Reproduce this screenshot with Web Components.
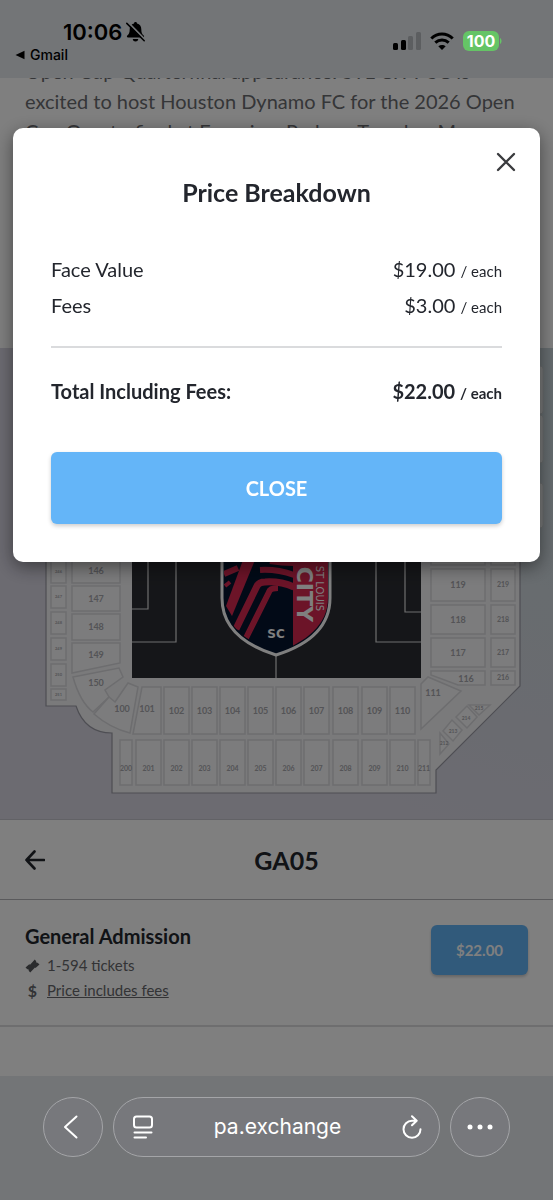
<!DOCTYPE html>
<html lang="en">
<head>
<meta charset="utf-8">
<meta name="viewport" content="width=device-width, initial-scale=1">
<title>Tickets</title>
<style>
  body {
    margin: 0;
    background: #fff;
    font-family: Lato, "Liberation Sans", sans-serif;
    color: #23262d;
  }
</style>
</head>
<body>
<ticket-page>
  <status-bar slot="status" time="10:06" back="Gmail" battery="100"></status-bar>
  <event-text>Open Cup Quarterfinal appearance. STL CITY SC is excited to host Houston Dynamo FC for the 2026 Open Cup Quarterfinal at Energizer Park on Tuesday, May</event-text>
  <seat-map></seat-map>
  <section-header>GA05</section-header>
  <ticket-listing price="$22.00">
    General Admission
    <span slot="quantity">1-594 tickets</span>
    <a slot="fees" href="#fees">Price includes fees</a>
  </ticket-listing>
  <price-dialog slot="dialog" heading="Price Breakdown">
    <price-row amount="$19.00">Face Value</price-row>
    <price-row amount="$3.00">Fees</price-row>
    <price-row slot="total" amount="$22.00" strong>Total Including Fees:</price-row>
  </price-dialog>
  <browser-bar slot="toolbar">pa.exchange</browser-bar>
</ticket-page>

<script>
class TicketPage extends HTMLElement {
  constructor() {
    super();
    this.attachShadow({ mode: "open" });
  }

  connectedCallback() {
    this.shadowRoot.innerHTML = `
      <style>
        :host {
          display: flex;
          flex-direction: column;
          min-height: 100vh;
        }
        main {
          flex: 1;
          display: flex;
          flex-direction: column;
        }
      </style>
      <slot name="status"></slot>
      <main><slot></slot></main>
      <slot name="dialog"></slot>
      <slot name="toolbar"></slot>
    `;
  }
}
customElements.define("ticket-page", TicketPage);

class StatusBar extends HTMLElement {
  constructor() {
    super();
    this.attachShadow({ mode: "open" });
  }

  connectedCallback() {
    const time = this.getAttribute("time");
    const back = this.getAttribute("back");
    const battery = this.getAttribute("battery");

    this.shadowRoot.innerHTML = `
      <style>
        :host {
          display: flex;
          justify-content: space-between;
          box-sizing: border-box;
          height: 78px;
          padding: 18px 51px 0 15px;
          background: #737577;
          color: #000;
          font-family: Inter, "Liberation Sans", sans-serif;
          position: sticky;
          top: 0;
          z-index: 2;
        }
        .clock {
          display: flex;
          align-items: center;
          gap: 4px;
          padding-left: 48px;
          font-size: 22px;
          font-weight: 600;
          line-height: 28px;
        }
        a {
          display: flex;
          align-items: center;
          gap: 5px;
          color: inherit;
          font-size: 14px;
          font-weight: 500;
          line-height: 18px;
          text-decoration: none;
        }
        .signals {
          display: flex;
          align-items: center;
          gap: 9px;
          height: 46px;
        }
        .battery {
          display: flex;
          align-items: center;
        }
        .level {
          width: 36px;
          border-radius: 6px;
          background: #65c466;
          color: #fff;
          font-size: 16px;
          font-weight: 700;
          line-height: 20px;
          text-align: center;
        }
        svg { display: block; }
      </style>
      <div>
        <div class="clock">
          <span>${time}</span>
          <svg width="19" height="20" viewBox="0 0 19 20" aria-hidden="true">
            <path d="M9.500 0c1 0 1.500.6 1.500 1.500 2.900.7 4.300 2.900 4.300 5.700 0 3.500.8 4.800 2.400 6.300.8.800.4 2-.7 2H2c-1.100 0-1.500-1.200-.7-2 1.600-1.500 2.400-2.800 2.400-6.300C3.700 4.400 5.100 2.200 8 1.500 8 .6 8.500 0 9.500 0zM6.700 17h5.600c-.3 1.700-1.300 2.500-2.800 2.500S7 18.700 6.700 17z"/>
            <path d="M2 .2l17 17.400" stroke="#737577" stroke-width="1.800"/>
            <path d="M.8 1.400l17.400 17.400" stroke="#000" stroke-width="1.500" stroke-linecap="round"/>
          </svg>
        </div>
        <a href="#back">
          <svg width="10" height="10" viewBox="0 0 10 10" aria-hidden="true"><path d="M.5 5L9.500 .8v8.400z"/></svg>
          ${back}
        </a>
      </div>
      <div class="signals">
        <svg width="28" height="18" viewBox="0 0 28 18" aria-hidden="true">
          <rect x="0" y="11" width="5" height="7" rx="1.500"/>
          <rect x="8" y="8" width="5" height="10" rx="1.500"/>
          <rect x="15" y="4" width="5" height="14" rx="1.500" fill="#5c5e60"/>
          <rect x="23" y="0" width="5" height="18" rx="1.500" fill="#5c5e60"/>
        </svg>
        <svg width="24" height="18" viewBox="0 0 24 18" aria-hidden="true">
          <g fill="none" stroke="#000" stroke-width="3">
            <path d="M1.300 6.500C7.500 .4 16.500 .4 22.700 6.500"/>
            <path d="M5.300 10.700c4-3.700 9.400-3.700 13.400 0"/>
          </g>
          <path d="M12 18l-3.700-3.700c2.200-1.900 5.200-1.900 7.400 0z"/>
        </svg>
        <div class="battery">
          <span class="level">${battery}</span>
          <svg width="3" height="8" viewBox="0 0 3 8" aria-hidden="true"><path d="M1 1c2 1 2 5 0 6z" fill="#65c466"/></svg>
        </div>
      </div>
    `;
  }
}
customElements.define("status-bar", StatusBar);

class EventText extends HTMLElement {
  constructor() {
    super();
    this.attachShadow({ mode: "open" });
    this.shadowRoot.innerHTML = `
      <style>
        :host {
          display: block;
          min-height: 270px;
          overflow: hidden;
          background: #fff;
        }
        /* scrolled partly under the status bar */
        p {
          margin: -22px 25px 0;
          font-size: 20px;
          line-height: 30px;
          color: #6b6c70;
        }
      </style>
      <p><slot></slot></p>
    `;
  }
}
customElements.define("event-text", EventText);

// Straight section blocks: label, x, y, width, height
const LOWER = [
  ["102", 164, 687, 25, 47], ["103", 192, 687, 25, 47], ["104", 220, 687, 25, 47],
  ["105", 248, 687, 25, 47], ["106", 276, 687, 25, 47], ["107", 304, 687, 25, 47],
  ["108", 333, 687, 25, 47], ["109", 362, 687, 25, 47], ["110", 390, 687, 25, 47],
  ["146", 72, 558, 48, 25], ["147", 72, 586, 48, 25], ["148", 72, 614, 48, 26],
  ["120", 431, 540, 54, 25], ["119", 431, 569, 54, 32], ["118", 431, 605, 54, 29],
  ["117", 431, 638, 54, 29],
];
const UPPER = [
  ["200", 120, 740, 12, 45], ["201", 136, 740, 25, 45], ["202", 164, 740, 25, 45],
  ["203", 192, 740, 25, 45], ["204", 220, 740, 25, 45], ["205", 248, 740, 25, 45],
  ["206", 276, 740, 25, 45], ["207", 304, 740, 25, 45], ["208", 333, 740, 25, 45],
  ["209", 362, 740, 25, 45], ["210", 390, 740, 25, 45], ["211", 418, 740, 12, 45],
  ["220", 491, 540, 24, 25], ["219", 491, 569, 24, 32], ["218", 491, 605, 24, 29],
  ["217", 491, 638, 24, 29], ["216", 491, 671, 24, 14],
];
const SIDE = [
  ["246", 51, 561, 15, 22], ["247", 51, 586, 15, 22], ["248", 51, 612, 15, 22],
  ["249", 51, 638, 15, 22], ["250", 51, 664, 15, 22], ["251", 51, 689, 15, 11],
];
// Corner blocks: label, label x, label y, path, label size
const CORNERS = [
  ["149", 96, 655, "M72 643H120V663L72 673Z", 9],
  ["150", 96, 683, "M73 677L119 668L123 677L105 690L109 697L93 712Q80 702 73 677Z", 9],
  ["100", 122, 709, "M115 702L128 683L138 687L130 733Q110 728 94 714L109 697Z", 9],
  ["101", 147, 709, "M142 687H161V734H133Z", 9],
  ["116", 466, 679, "M431 671H485V685H458L431 675Z", 9],
  ["111", 433, 693, "M421 684L428 677L461 691L421 729Z", 9],
  ["212", 444, 743, "M440 733L449 744L440 754Z", 5],
  ["213", 453, 731, "M443 731L452 720L462 730L453 741Z", 5],
  ["214", 466, 718, "M456 717L467 706L477 717L467 728Z", 5],
  ["215", 479, 708, "M469 705H490L479 715Z", 5],
];

class SeatMap extends HTMLElement {
  constructor() {
    super();
    this.attachShadow({ mode: "open" });
  }

  connectedCallback() {
    this.shadowRoot.innerHTML = `
      <style>
        :host {
          display: block;
          background:
            radial-gradient(circle at 110% 15%, #c4d4da, #d0d8de 25%, rgba(216, 218, 228, 0) 60%),
            #d8d6e3;
        }
        svg { display: block; width: 100%; height: auto; }
        .block { fill: #f9f9fa; stroke: #dadade; stroke-width: 1.500; }
        text { font-family: Lato, sans-serif; text-anchor: middle; fill: #a8a8ae; font-weight: 700; }
        .field { fill: none; stroke: #dcdcde; stroke-width: 1.200; }
      </style>
      <svg viewBox="0 348 553 472" role="img" aria-label="Stadium seating map">
        <path d="M46 400V706H76Q85 733 112 733V793H436V770L520 686V400Z" fill="#f4f4f6" stroke="#9c9ca6" stroke-width="1.200"/>
        <path d="M0 819.500H553" stroke="#c4c4cc"/>
        ${this.blocks(LOWER, 9)}
        ${this.blocks(UPPER, 7)}
        ${this.blocks(SIDE, 4)}
        ${CORNERS.map(([label, x, y, d, size]) => `
          <path class="block" d="${d}"/>
          ${this.label(label, x, y, size)}`).join("")}
        <rect x="132" y="400" width="289" height="278" fill="#2b2d32"/>
        <path class="field" d="M132 609H148V450M132 642H176V430M421 612H405V450M421 642H376V430M276 655V678"/>
        ${this.crest()}
        <g fill="#f2f4f4" stroke="#d2d6d8">
          <rect x="500" y="366" width="43" height="48" rx="3"/>
          <rect x="500" y="415" width="43" height="48" rx="3"/>
          <rect x="500" y="483" width="43" height="45" rx="3"/>
        </g>
      </svg>
    `;
  }

  label(text, x, y, size) {
    return `<text x="${x}" y="${y + Math.round(size / 3)}" font-size="${size}">${text}</text>`;
  }

  blocks(list, size) {
    return list.map(([text, x, y, w, h]) => `
      <rect class="block" x="${x}" y="${y}" width="${w}" height="${h}"/>
      ${this.label(text, x + w / 2, y + h / 2 + (size === 7 && h > 40 ? 6 : 0), size)}`).join("");
  }

  crest() {
    return `
      <clipPath id="shield"><path d="M224 480H328V598C328 625 306 642 276 653C246 642 224 625 224 598Z"/></clipPath>
      <path d="M222 480H330V598C330 627 308 645 276 655C244 645 222 627 222 598Z" fill="#04152f" stroke="#fff" stroke-width="3"/>
      <g clip-path="url(#shield)">
        <rect x="293" y="480" width="40" height="180" fill="#d82850"/>
        <path d="M243 560H255L232 616L226 606Z" fill="#d82850"/>
        <g fill="none" stroke="#d82850" stroke-width="6">
          <path d="M224 574L238 568"/>
          <path d="M225 586L230 582" stroke-width="4"/>
          <path d="M270 561Q282 563 294 563"/>
          <path d="M260 570Q277 569 294 575"/>
          <path d="M236 629L257 586Q259 582 265 582Q280 581 294 587" stroke-width="7"/>
          <path d="M246 638L269 592Q270 588 278 588"/>
        </g>
        <text transform="translate(297 622) rotate(90)" style="font:700 22px 'DejaVu Sans',sans-serif;fill:#fff;text-anchor:end">CITY</text>
        <text transform="translate(316 611) rotate(90)" style="font:400 10px 'DejaVu Sans',sans-serif;fill:#fff;text-anchor:end">ST LOUIS</text>
      </g>
      <text x="276" y="638" style="font:700 12px 'DejaVu Sans',sans-serif;fill:#fff">SC</text>
    `;
  }
}
customElements.define("seat-map", SeatMap);

class SectionHeader extends HTMLElement {
  constructor() {
    super();
    this.attachShadow({ mode: "open" });
    this.shadowRoot.innerHTML = `
      <style>
        :host {
          display: flex;
          align-items: center;
          box-sizing: border-box;
          height: 80px;
          padding: 0 25px;
          background: #fff;
          border-bottom: 1px solid #b4b4b8;
        }
        button {
          padding: 0;
          border: 0;
          background: none;
          cursor: pointer;
        }
        svg { display: block; }
        h2 {
          flex: 1;
          margin: 0;
          font-size: 25px;
          font-weight: 700;
          line-height: 30px;
          text-align: center;
        }
      </style>
      <button type="button" aria-label="Back to the map">
        <svg width="20" height="20" viewBox="0 0 20 20" fill="none" stroke="#23262d" stroke-width="2.600" stroke-linecap="round" stroke-linejoin="round">
          <path d="M19 10H1.500M9.500 1.500L1.500 10l8 8.500"/>
        </svg>
      </button>
      <h2><slot></slot></h2>
    `;
  }
}
customElements.define("section-header", SectionHeader);

class TicketListing extends HTMLElement {
  constructor() {
    super();
    this.attachShadow({ mode: "open" });
  }

  connectedCallback() {
    this.shadowRoot.innerHTML = `
      <style>
        :host {
          display: flex;
          align-items: flex-start;
          justify-content: space-between;
          padding: 23px 25px 22px;
          background: #fff;
          border-bottom: 2px solid #dcdcde;
        }
        h3 {
          margin: 0 0 4px;
          font-size: 20px;
          font-weight: 700;
          line-height: 26px;
        }
        .line {
          display: flex;
          align-items: center;
          gap: 7px;
          font-size: 15px;
          line-height: 25px;
          color: #66676b;
        }
        svg { display: block; }
        .icon {
          width: 15px;
          font-size: 16px;
          text-align: center;
        }
        ::slotted(a) { color: inherit; }
        button {
          width: 97px;
          height: 50px;
          margin-top: 2px;
          border: 0;
          border-radius: 6px;
          background: #62b4f7;
          box-shadow: 0 2px 3px rgba(0, 0, 0, .2);
          color: #fff;
          font: 700 15px/20px Lato, sans-serif;
          cursor: pointer;
        }
      </style>
      <div>
        <h3><slot></slot></h3>
        <div class="line">
          <svg width="15" height="14" viewBox="0 0 15 14" aria-hidden="true">
            <path fill="#55565a" d="M.5 8.500L4.500 5l.3 1L9.800 .5l1.400 1.700c-.3 1 .4 1.800 1.500 1.500L14.500 5.500 10.500 9l-.5-.6L5.200 13.500l-1.500-1.700c.3-1-.4-1.800-1.400-1.500z"/>
          </svg>
          <slot name="quantity"></slot>
        </div>
        <div class="line">
          <b class="icon">$</b>
          <slot name="fees"></slot>
        </div>
      </div>
      <button type="button">${this.getAttribute("price")}</button>
    `;
  }
}
customElements.define("ticket-listing", TicketListing);

class PriceDialog extends HTMLElement {
  constructor() {
    super();
    this.attachShadow({ mode: "open" });
  }

  connectedCallback() {
    this.shadowRoot.innerHTML = `
      <style>
        /* backdrop over the page, below the bars */
        :host {
          display: block;
          position: fixed;
          inset: 0;
          z-index: 1;
          box-sizing: border-box;
          padding: 128px 13px 0;
          background: rgba(0, 0, 0, .5);
        }
        :host([hidden]) { display: none; }
        .dialog {
          display: flex;
          flex-direction: column;
          padding: 21px 38px 38px;
          border-radius: 10px;
          background: #fff;
          box-shadow: 0 5px 18px rgba(0, 0, 0, .45);
        }
        .x {
          align-self: flex-end;
          margin-right: -17px;
          padding: 3px;
          border: 0;
          background: none;
          cursor: pointer;
        }
        svg { display: block; }
        h1 {
          margin: 1px 0 43px;
          font-size: 25px;
          font-weight: 700;
          line-height: 32px;
          text-align: center;
        }
        hr {
          width: 100%;
          height: 2px;
          margin: 23px 0 25px;
          border: 0;
          background: #dadbdd;
        }
        .close {
          height: 72px;
          margin-top: 43px;
          border: 0;
          border-radius: 6px;
          background: #64b5f8;
          box-shadow: 0 2px 4px rgba(0, 0, 0, .2);
          color: #fff;
          font: 700 20px/24px Lato, sans-serif;
          cursor: pointer;
        }
      </style>
      <div class="dialog" role="dialog" aria-modal="true" aria-labelledby="heading">
        <button class="x" type="button" aria-label="Dismiss">
          <svg width="20" height="20" viewBox="0 0 20 20" stroke="#3a3b3e" stroke-width="2.400" stroke-linecap="round"><path d="M2 2l16 16M18 2L2 18"/></svg>
        </button>
        <h1 id="heading">${this.getAttribute("heading")}</h1>
        <slot></slot>
        <hr>
        <slot name="total"></slot>
        <button class="close" type="button">CLOSE</button>
      </div>
    `;
    this.shadowRoot.querySelectorAll("button").forEach((button) => {
      button.addEventListener("click", () => {
        this.hidden = true;
      });
    });
  }
}
customElements.define("price-dialog", PriceDialog);

class PriceRow extends HTMLElement {
  constructor() {
    super();
    this.attachShadow({ mode: "open" });
  }

  connectedCallback() {
    this.shadowRoot.innerHTML = `
      <style>
        :host {
          display: flex;
          justify-content: space-between;
          font-size: 20px;
          line-height: 36px;
        }
        :host([strong]) { font-weight: 700; }
        small {
          font-size: 15px;
          line-height: 20px;
        }
      </style>
      <span><slot></slot></span>
      <span>${this.getAttribute("amount")} <small>/ each</small></span>
    `;
  }
}
customElements.define("price-row", PriceRow);

class BrowserBar extends HTMLElement {
  constructor() {
    super();
    this.attachShadow({ mode: "open" });
    this.shadowRoot.innerHTML = `
      <style>
        :host {
          display: flex;
          align-items: flex-start;
          gap: 10px;
          box-sizing: border-box;
          height: 124px;
          padding: 21px 43px 0;
          background: #737577;
          color: #fff;
          font-family: Inter, "Liberation Sans", sans-serif;
          position: sticky;
          bottom: 0;
          z-index: 2;
        }
        button {
          display: flex;
          align-items: center;
          justify-content: center;
          padding: 0;
          border: 0;
          background: none;
          color: inherit;
          cursor: pointer;
        }
        .round, .address {
          box-sizing: border-box;
          height: 60px;
          border: 1px solid #a4a5a8;
          border-radius: 30px;
          background: #77787c;
        }
        .round { width: 60px; }
        .address {
          flex: 1;
          display: flex;
          align-items: center;
          justify-content: space-between;
          padding: 0 17px 0 19px;
          font-size: 21px;
          line-height: 28px;
        }
        svg {
          display: block;
          fill: none;
          stroke: currentColor;
          stroke-width: 2;
          stroke-linecap: round;
          stroke-linejoin: round;
        }
      </style>
      <button class="round" type="button" aria-label="Back">
        <svg width="24" height="24" viewBox="0 0 24 24"><path d="M15.500 1.500L4 12 15.500 22.500"/></svg>
      </button>
      <div class="address">
        <button type="button" aria-label="Page settings">
          <svg width="20" height="24" viewBox="0 0 20 24"><rect x="1" y="1.500" width="18" height="11" rx="2.500"/><path d="M1.500 17.500h17M1.500 22.500h11.500"/></svg>
        </button>
        <span><slot></slot></span>
        <button type="button" aria-label="Reload">
          <svg width="20" height="24" viewBox="0 0 20 24"><path d="M14.500 5.700H10a8.500 8.500 0 1 0 8.500 8.500M10 1.200l4.700 4.500L10 10.200"/></svg>
        </button>
      </div>
      <button class="round" type="button" aria-label="More">
        <svg width="26" height="6" viewBox="0 0 26 6" style="fill:currentColor;stroke:none"><circle cx="3" cy="3" r="2.500"/><circle cx="13" cy="3" r="2.500"/><circle cx="23" cy="3" r="2.500"/></svg>
      </button>
    `;
  }
}
customElements.define("browser-bar", BrowserBar);
</script>
</body>
</html>
